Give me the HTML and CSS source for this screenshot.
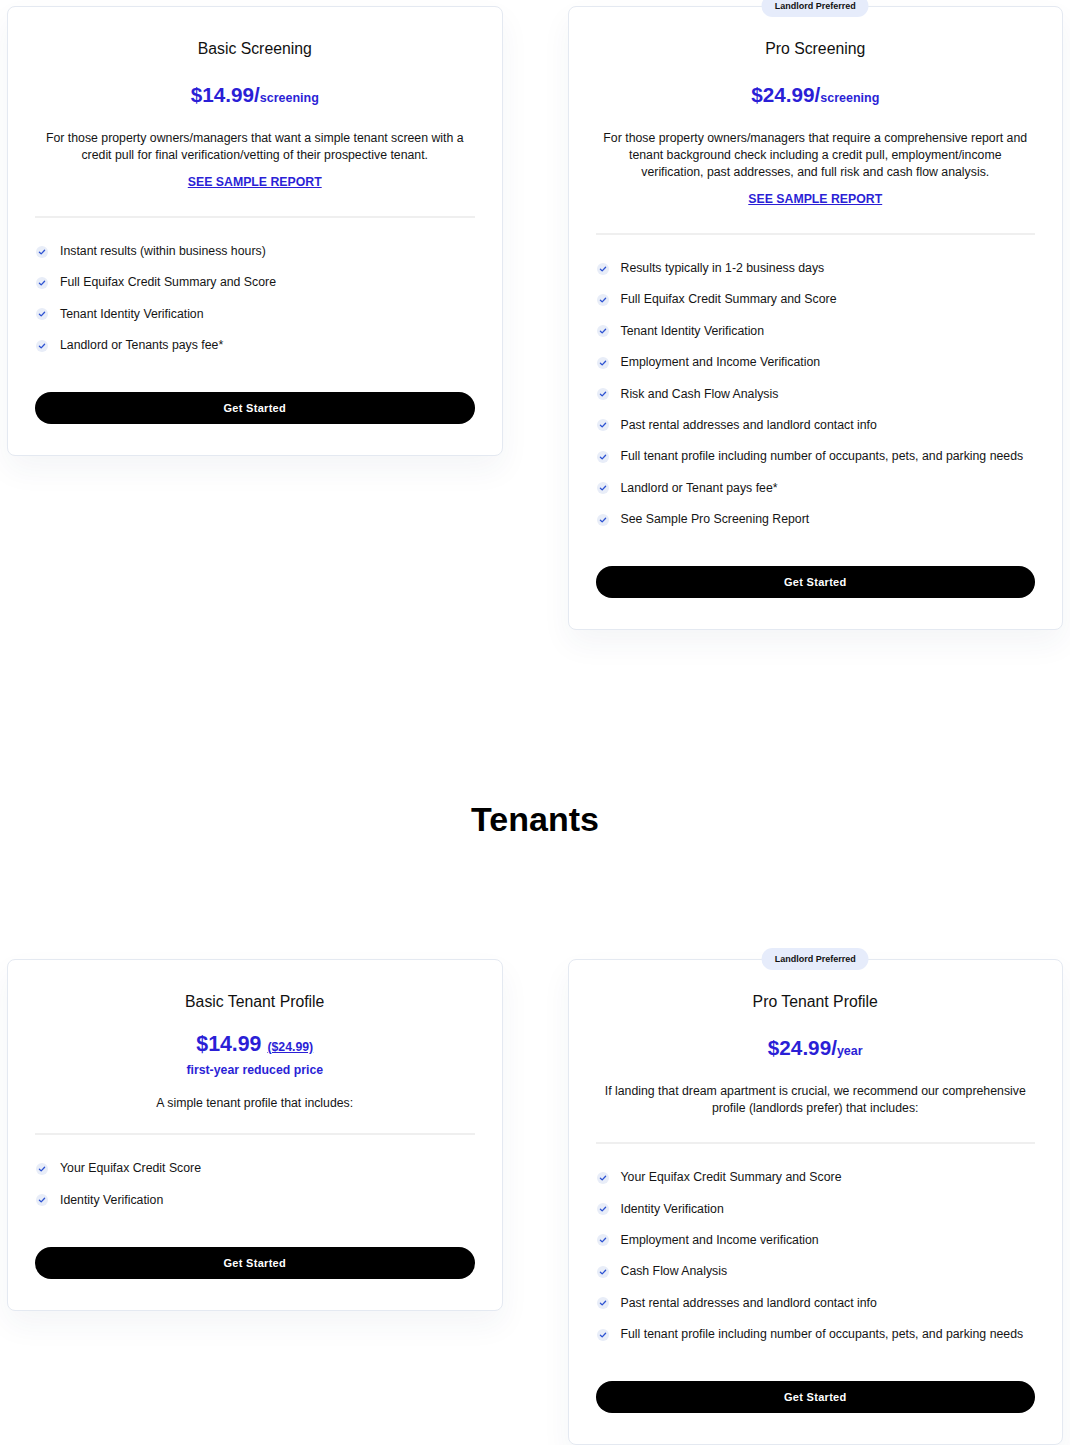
FILE: index.html
```html
<!DOCTYPE html>
<html lang="en">
<head>
<meta charset="utf-8">
<title>Pricing</title>
<link rel="stylesheet" href="styles.css">
</head>
<body>
<div class="page">
  <div class="row">
    <div class="card">
      <h3 class="title">Basic Screening</h3>
      <div class="price">$14.99/<span class="unit">screening</span></div>
      <p class="desc">For those property owners/managers that want a simple tenant screen with a credit pull for final verification/vetting of their prospective tenant.</p>
      <a class="sample" href="#">SEE SAMPLE REPORT</a>
      <div class="divider"></div>
      <ul class="features">
        <li><svg class="check" viewBox="0 0 14 14"><circle cx="7" cy="7" r="6" fill="#e8edf8"/><polyline points="4.4,7.2 6.2,8.9 9.6,5.3" fill="none" stroke="#2d52d2" stroke-width="1.3" stroke-linecap="round" stroke-linejoin="round"/></svg>Instant results (within business hours)</li>
        <li><svg class="check" viewBox="0 0 14 14"><circle cx="7" cy="7" r="6" fill="#e8edf8"/><polyline points="4.4,7.2 6.2,8.9 9.6,5.3" fill="none" stroke="#2d52d2" stroke-width="1.3" stroke-linecap="round" stroke-linejoin="round"/></svg>Full Equifax Credit Summary and Score</li>
        <li><svg class="check" viewBox="0 0 14 14"><circle cx="7" cy="7" r="6" fill="#e8edf8"/><polyline points="4.4,7.2 6.2,8.9 9.6,5.3" fill="none" stroke="#2d52d2" stroke-width="1.3" stroke-linecap="round" stroke-linejoin="round"/></svg>Tenant Identity Verification</li>
        <li><svg class="check" viewBox="0 0 14 14"><circle cx="7" cy="7" r="6" fill="#e8edf8"/><polyline points="4.4,7.2 6.2,8.9 9.6,5.3" fill="none" stroke="#2d52d2" stroke-width="1.3" stroke-linecap="round" stroke-linejoin="round"/></svg>Landlord or Tenants pays fee*</li>
      </ul>
      <button class="cta">Get Started</button>
    </div>

    <div class="card">
      <span class="badge">Landlord Preferred</span>
      <h3 class="title">Pro Screening</h3>
      <div class="price">$24.99/<span class="unit">screening</span></div>
      <p class="desc">For those property owners/managers that require a comprehensive report and tenant background check including a credit pull, employment/income verification, past addresses, and full risk and cash flow analysis.</p>
      <a class="sample" href="#">SEE SAMPLE REPORT</a>
      <div class="divider"></div>
      <ul class="features">
        <li><svg class="check" viewBox="0 0 14 14"><circle cx="7" cy="7" r="6" fill="#e8edf8"/><polyline points="4.4,7.2 6.2,8.9 9.6,5.3" fill="none" stroke="#2d52d2" stroke-width="1.3" stroke-linecap="round" stroke-linejoin="round"/></svg>Results typically in 1-2 business days</li>
        <li><svg class="check" viewBox="0 0 14 14"><circle cx="7" cy="7" r="6" fill="#e8edf8"/><polyline points="4.4,7.2 6.2,8.9 9.6,5.3" fill="none" stroke="#2d52d2" stroke-width="1.3" stroke-linecap="round" stroke-linejoin="round"/></svg>Full Equifax Credit Summary and Score</li>
        <li><svg class="check" viewBox="0 0 14 14"><circle cx="7" cy="7" r="6" fill="#e8edf8"/><polyline points="4.4,7.2 6.2,8.9 9.6,5.3" fill="none" stroke="#2d52d2" stroke-width="1.3" stroke-linecap="round" stroke-linejoin="round"/></svg>Tenant Identity Verification</li>
        <li><svg class="check" viewBox="0 0 14 14"><circle cx="7" cy="7" r="6" fill="#e8edf8"/><polyline points="4.4,7.2 6.2,8.9 9.6,5.3" fill="none" stroke="#2d52d2" stroke-width="1.3" stroke-linecap="round" stroke-linejoin="round"/></svg>Employment and Income Verification</li>
        <li><svg class="check" viewBox="0 0 14 14"><circle cx="7" cy="7" r="6" fill="#e8edf8"/><polyline points="4.4,7.2 6.2,8.9 9.6,5.3" fill="none" stroke="#2d52d2" stroke-width="1.3" stroke-linecap="round" stroke-linejoin="round"/></svg>Risk and Cash Flow Analysis</li>
        <li><svg class="check" viewBox="0 0 14 14"><circle cx="7" cy="7" r="6" fill="#e8edf8"/><polyline points="4.4,7.2 6.2,8.9 9.6,5.3" fill="none" stroke="#2d52d2" stroke-width="1.3" stroke-linecap="round" stroke-linejoin="round"/></svg>Past rental addresses and landlord contact info</li>
        <li><svg class="check" viewBox="0 0 14 14"><circle cx="7" cy="7" r="6" fill="#e8edf8"/><polyline points="4.4,7.2 6.2,8.9 9.6,5.3" fill="none" stroke="#2d52d2" stroke-width="1.3" stroke-linecap="round" stroke-linejoin="round"/></svg>Full tenant profile including number of occupants, pets, and parking needs</li>
        <li><svg class="check" viewBox="0 0 14 14"><circle cx="7" cy="7" r="6" fill="#e8edf8"/><polyline points="4.4,7.2 6.2,8.9 9.6,5.3" fill="none" stroke="#2d52d2" stroke-width="1.3" stroke-linecap="round" stroke-linejoin="round"/></svg>Landlord or Tenant pays fee*</li>
        <li><svg class="check" viewBox="0 0 14 14"><circle cx="7" cy="7" r="6" fill="#e8edf8"/><polyline points="4.4,7.2 6.2,8.9 9.6,5.3" fill="none" stroke="#2d52d2" stroke-width="1.3" stroke-linecap="round" stroke-linejoin="round"/></svg>See Sample Pro Screening Report</li>
      </ul>
      <button class="cta">Get Started</button>
    </div>
  </div>

  <h2 class="section-title">Tenants</h2>

  <div class="row">
    <div class="card">
      <h3 class="title">Basic Tenant Profile</h3>
      <div class="price price-tight">$14.99 <a class="old" href="#">($24.99)</a></div>
      <div class="price-note">first-year reduced price</div>
      <p class="desc desc-short">A simple tenant profile that includes:</p>
      <div class="divider divider-tight"></div>
      <ul class="features">
        <li><svg class="check" viewBox="0 0 14 14"><circle cx="7" cy="7" r="6" fill="#e8edf8"/><polyline points="4.4,7.2 6.2,8.9 9.6,5.3" fill="none" stroke="#2d52d2" stroke-width="1.3" stroke-linecap="round" stroke-linejoin="round"/></svg>Your Equifax Credit Score</li>
        <li><svg class="check" viewBox="0 0 14 14"><circle cx="7" cy="7" r="6" fill="#e8edf8"/><polyline points="4.4,7.2 6.2,8.9 9.6,5.3" fill="none" stroke="#2d52d2" stroke-width="1.3" stroke-linecap="round" stroke-linejoin="round"/></svg>Identity Verification</li>
      </ul>
      <button class="cta">Get Started</button>
    </div>

    <div class="card">
      <span class="badge">Landlord Preferred</span>
      <h3 class="title">Pro Tenant Profile</h3>
      <div class="price">$24.99/<span class="unit">year</span></div>
      <p class="desc">If landing that dream apartment is crucial, we recommend our comprehensive profile (landlords prefer) that includes:</p>
      <div class="divider"></div>
      <ul class="features">
        <li><svg class="check" viewBox="0 0 14 14"><circle cx="7" cy="7" r="6" fill="#e8edf8"/><polyline points="4.4,7.2 6.2,8.9 9.6,5.3" fill="none" stroke="#2d52d2" stroke-width="1.3" stroke-linecap="round" stroke-linejoin="round"/></svg>Your Equifax Credit Summary and Score</li>
        <li><svg class="check" viewBox="0 0 14 14"><circle cx="7" cy="7" r="6" fill="#e8edf8"/><polyline points="4.4,7.2 6.2,8.9 9.6,5.3" fill="none" stroke="#2d52d2" stroke-width="1.3" stroke-linecap="round" stroke-linejoin="round"/></svg>Identity Verification</li>
        <li><svg class="check" viewBox="0 0 14 14"><circle cx="7" cy="7" r="6" fill="#e8edf8"/><polyline points="4.4,7.2 6.2,8.9 9.6,5.3" fill="none" stroke="#2d52d2" stroke-width="1.3" stroke-linecap="round" stroke-linejoin="round"/></svg>Employment and Income verification</li>
        <li><svg class="check" viewBox="0 0 14 14"><circle cx="7" cy="7" r="6" fill="#e8edf8"/><polyline points="4.4,7.2 6.2,8.9 9.6,5.3" fill="none" stroke="#2d52d2" stroke-width="1.3" stroke-linecap="round" stroke-linejoin="round"/></svg>Cash Flow Analysis</li>
        <li><svg class="check" viewBox="0 0 14 14"><circle cx="7" cy="7" r="6" fill="#e8edf8"/><polyline points="4.4,7.2 6.2,8.9 9.6,5.3" fill="none" stroke="#2d52d2" stroke-width="1.3" stroke-linecap="round" stroke-linejoin="round"/></svg>Past rental addresses and landlord contact info</li>
        <li><svg class="check" viewBox="0 0 14 14"><circle cx="7" cy="7" r="6" fill="#e8edf8"/><polyline points="4.4,7.2 6.2,8.9 9.6,5.3" fill="none" stroke="#2d52d2" stroke-width="1.3" stroke-linecap="round" stroke-linejoin="round"/></svg>Full tenant profile including number of occupants, pets, and parking needs</li>
      </ul>
      <button class="cta">Get Started</button>
    </div>
  </div>
</div>
</body>
</html>
```

FILE: styles.css
```css
* { box-sizing: border-box; }

html, body {
  margin: 0;
  padding: 0;
  background: #ffffff;
}

body {
  font-family: "Liberation Sans", Arial, sans-serif;
  color: #151515;
}

.page {
  padding: 6px 7px 0 7px;
}

.row {
  display: grid;
  grid-template-columns: 1fr 1fr;
  column-gap: 65px;
  align-items: start;
}

.card {
  position: relative;
  display: flex;
  flex-direction: column;
  background: #fff;
  border: 1px solid #e4e9f1;
  border-radius: 8px;
  padding: 31.5px 27px 31px 27px;
  box-shadow: 0 14px 30px rgba(40, 50, 90, 0.05);
  text-align: center;
}

.badge {
  position: absolute;
  top: -12px;
  left: 50%;
  transform: translateX(-50%);
  height: 22px;
  line-height: 22px;
  padding: 0 13px;
  border-radius: 11px;
  background: #e6ecfb;
  font-size: 9px;
  font-weight: 700;
  color: #111;
  white-space: nowrap;
}

.title {
  margin: 0;
  font-size: 15.8px;
  line-height: 20px;
  font-weight: 400;
  color: #111;
}

.price {
  margin-top: 22.5px;
  font-size: 20.7px;
  line-height: 28px;
  font-weight: 700;
  color: #2b1fd6;
}

.price .unit {
  font-size: 12.5px;
}

.price-tight {
  margin-top: 18.5px;
  font-size: 21.3px;
}

.price .old {
  font-size: 12.3px;
  color: #2b1fd6;
  text-decoration: underline;
}

.price-note {
  margin-top: 0.5px;
  font-size: 12.3px;
  line-height: 17px;
  font-weight: 700;
  color: #2b1fd6;
}

.desc {
  margin: 18px 0 0 0;
  padding: 0 4px;
  font-size: 12.3px;
  line-height: 17px;
  color: #151515;
}

.desc-short {
  margin-top: 16px;
}

.sample {
  display: block;
  margin-top: 10px;
  font-size: 12.3px;
  line-height: 17px;
  font-weight: 700;
  color: #2b1fd6;
  text-decoration: underline;
}

.divider {
  margin-top: 25px;
  height: 2px;
  background: #efefef;
}

.divider-tight {
  margin-top: 21.5px;
}

.features {
  list-style: none;
  margin: 25px 0 0 0;
  padding: 0;
  display: flex;
  flex-direction: column;
  gap: 14.4px;
  text-align: left;
}

.features li {
  display: flex;
  align-items: center;
  font-size: 12.3px;
  line-height: 17px;
  color: #151515;
}

.check {
  flex: none;
  width: 14px;
  height: 14px;
  margin-right: 11px;
}

.cta {
  margin-top: 38px;
  height: 32px;
  width: 100%;
  border: none;
  border-radius: 16px;
  background: #000;
  color: #fff;
  font-family: "Liberation Sans", Arial, sans-serif;
  font-size: 11px;
  font-weight: 700;
  letter-spacing: 0.3px;
  cursor: pointer;
}

.section-title {
  margin: 169px 0 120px 0;
  text-align: center;
  font-size: 34px;
  line-height: 40px;
  font-weight: 700;
  color: #000;
}
```
